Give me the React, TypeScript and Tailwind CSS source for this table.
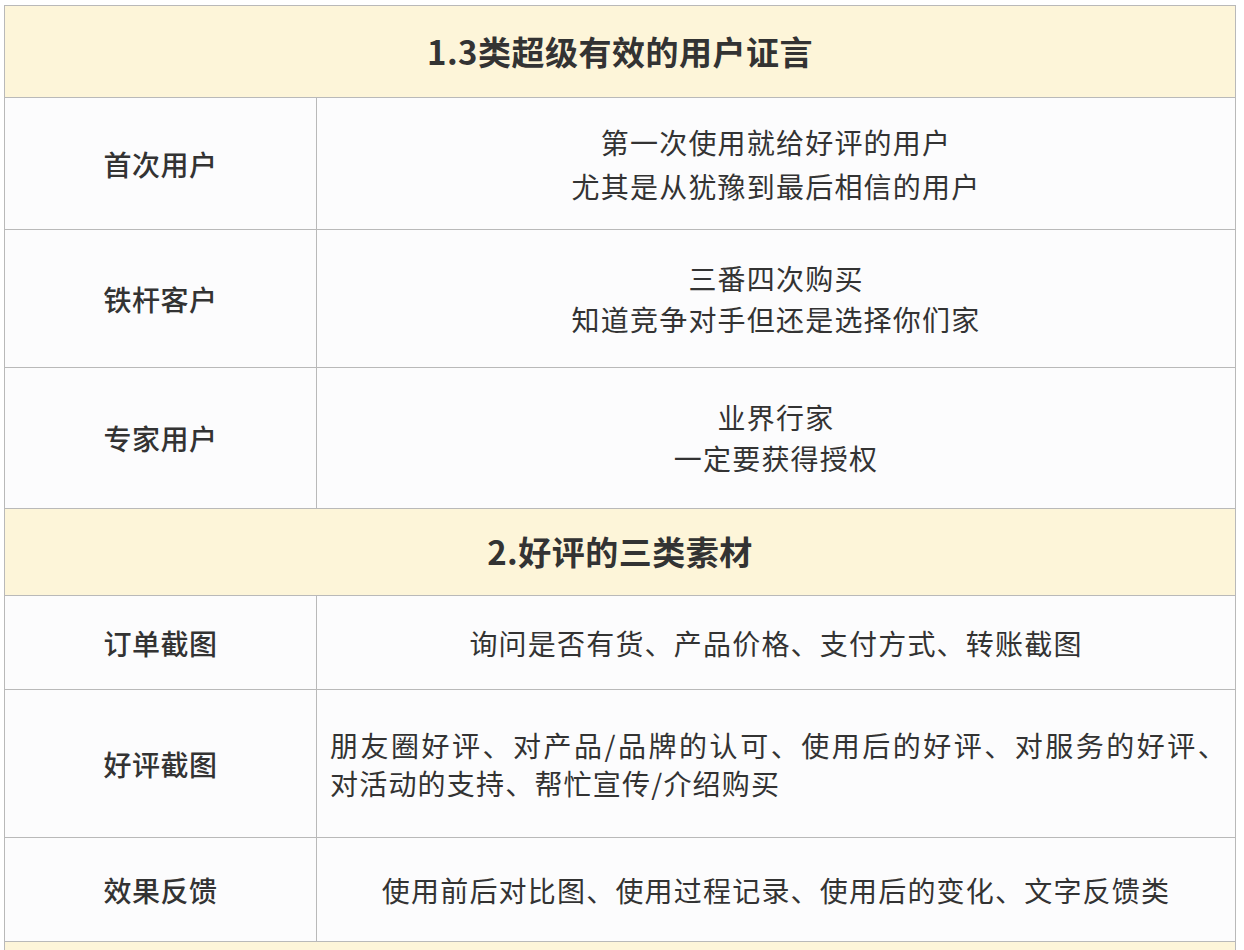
import React from "react";

const font = { fontFamily: '"Noto Sans CJK SC", "Noto Sans", sans-serif' };

function Header({ text, h }: { text: string; h: string }) {
  return (
    <div className={`${h} flex items-center justify-center border-b border-[#b9b9b9] bg-[#fdf5d9] text-[33px] font-bold tracking-[0.5px] text-[#333333]`}>
      {text}
    </div>
  );
}

function Row({ label, h, children, left }: { label: string; h: string; children: React.ReactNode; left?: boolean }) {
  return (
    <div className={`${h} flex border-b border-[#b9b9b9] bg-[#fcfcfd]`}>
      <div className="flex w-[312px] shrink-0 items-center justify-center border-r border-[#b9b9b9] text-[28px] font-medium tracking-[0.5px] text-[#333333]">
        {label}
      </div>
      <div
        className={`flex flex-1 text-[28px] tracking-[1.2px] text-[#333333] ${left ? "flex-col justify-center pl-[13px] pr-[8px] text-left" : "items-center justify-center text-center"}`}
      >
        {children}
      </div>
    </div>
  );
}

export default function App() {
  return (
    <div className="min-h-[950px] w-[1244px] overflow-hidden bg-white pt-[5px] pl-[4px]" style={font}>
      <div className="w-[1232px] border-x border-t border-[#b9b9b9]">
        <Header text="1.3类超级有效的用户证言" h="h-[92px]" />
        <Row label="首次用户" h="h-[132px]">
          <div className="leading-[44px]">
            第一次使用就给好评的用户
            <br />
            尤其是从犹豫到最后相信的用户
          </div>
        </Row>
        <Row label="铁杆客户" h="h-[138px]">
          <div className="leading-[41px]">
            三番四次购买
            <br />
            知道竞争对手但还是选择你们家
          </div>
        </Row>
        <Row label="专家用户" h="h-[141px]">
          <div className="leading-[41px]">
            业界行家
            <br />
            一定要获得授权
          </div>
        </Row>
        <Header text="2.好评的三类素材" h="h-[87px]" />
        <Row label="订单截图" h="h-[94px]">
          <div className="leading-[40px]">询问是否有货、产品价格、支付方式、转账截图</div>
        </Row>
        <Row label="好评截图" h="h-[148px]" left>
          <div className="w-full whitespace-nowrap text-justify leading-[38px] [text-align-last:justify]">
            朋友圈好评、对产品/品牌的认可、使用后的好评、对服务的好评、
          </div>
          <div className="whitespace-nowrap leading-[38px]">对活动的支持、帮忙宣传/介绍购买</div>
        </Row>
        <Row label="效果反馈" h="h-[104px]">
          <div className="leading-[40px]">使用前后对比图、使用过程记录、使用后的变化、文字反馈类</div>
        </Row>
        <div className="h-[60px] bg-[#fdf5d9]" />
      </div>
    </div>
  );
}
